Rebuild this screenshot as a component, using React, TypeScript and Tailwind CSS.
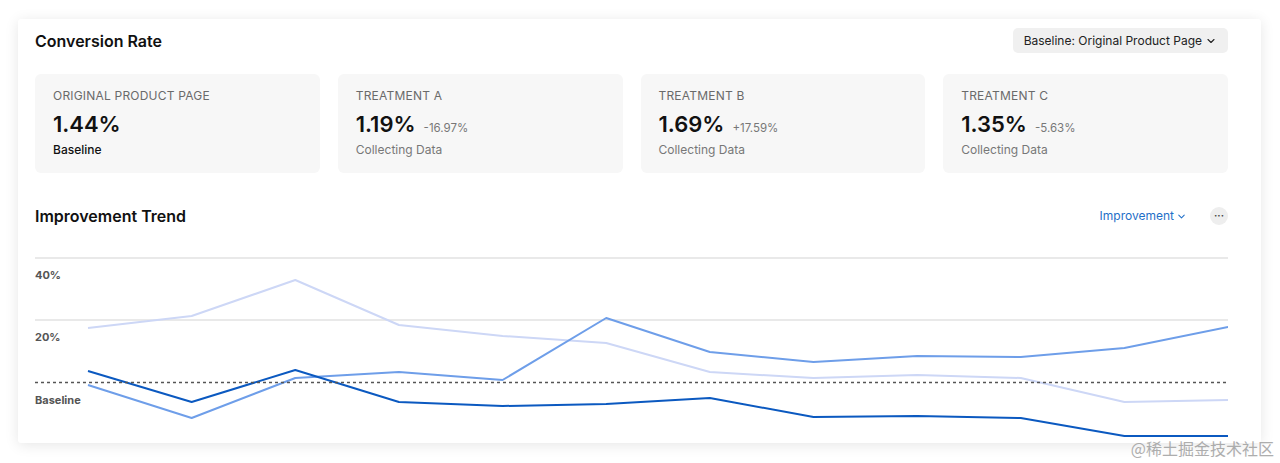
import React from "react";
import { ChevronDown } from "lucide-react";

const stats = [
  { label: "ORIGINAL PRODUCT PAGE", value: "1.44%", delta: "", sub: "Baseline", base: true },
  { label: "TREATMENT A", value: "1.19%", delta: "-16.97%", sub: "Collecting Data", base: false },
  { label: "TREATMENT B", value: "1.69%", delta: "+17.59%", sub: "Collecting Data", base: false },
  { label: "TREATMENT C", value: "1.35%", delta: "-5.63%", sub: "Collecting Data", base: false },
];

// y values in chart coordinates (svg top = page y 250)
const series = [
  { color: "#cdd7f6", ys: [78, 66, 30, 75, 86, 93, 122, 128, 125, 128, 152, 150] },
  { color: "#6e9ee9", ys: [135, 168, 128, 122, 130, 68, 102, 112, 106, 107, 98, 77] },
  { color: "#0b59c0", ys: [121, 152, 120, 152, 156, 154, 148, 167, 166, 168, 186, 186] },
];

const xs = Array.from({ length: 12 }, (_, i) => 53 + i * 103.64);

const TrendChart = () => (
  <svg width="1193" height="193" viewBox="0 0 1193 193" className="block">
    <line x1="0" y1="8" x2="1193" y2="8" stroke="#d4d4d4" strokeWidth="1.2" />
    <line x1="0" y1="70" x2="1193" y2="70" stroke="#d4d4d4" strokeWidth="1.2" />
    <text x="0" y="29" fontSize="11" fontWeight="700" fill="#555" fontFamily="Inter, sans-serif">
      40%
    </text>
    <text x="0" y="91" fontSize="11" fontWeight="700" fill="#555" fontFamily="Inter, sans-serif">
      20%
    </text>
    <text x="0" y="154" fontSize="11" fontWeight="700" fill="#555" fontFamily="Inter, sans-serif">
      Baseline
    </text>
    {series.map((s) => (
      <polyline
        key={s.color}
        points={s.ys.map((y, i) => `${xs[i]},${y}`).join(" ")}
        fill="none"
        stroke={s.color}
        strokeWidth="2"
        strokeLinejoin="round"
      />
    ))}
    <line x1="0" y1="132.5" x2="1193" y2="132.5" stroke="#555" strokeWidth="1.5" strokeDasharray="3 3" />
  </svg>
);

export default function App() {
  return (
    <div className="relative h-[463px] w-[1280px] overflow-hidden bg-white pl-[18px] pt-[19px] font-['Inter',sans-serif]">
      <div className="h-[424px] w-[1243px] rounded-[3px] bg-white pl-[17px] pr-[33px] pt-[9px] shadow-[0_2px_14px_rgba(0,0,0,0.1)]">
        <div className="flex h-[25px] items-center justify-between">
          <h2 className="text-[16px] font-semibold leading-6 text-[#111]">Conversion Rate</h2>
          <button className="flex h-[25px] items-center gap-[3px] rounded-[5px] bg-[#f0f0f0] px-[11px] text-[12px] text-[#222]">
            Baseline: Original Product Page
            <ChevronDown size={12} strokeWidth={2.2} />
          </button>
        </div>

        <div className="mt-[21px] grid grid-cols-4 gap-[18px]">
          {stats.map((s) => (
            <div key={s.label} className="h-[99px] rounded-[6px] bg-[#f7f7f7] px-[18px] pt-[14px]">
              <div className="text-[12px] leading-4 tracking-[0.2px] text-[#6a6a6a]">{s.label}</div>
              <div className="mt-[6px] flex items-baseline gap-[8px]">
                <span className="text-[22px] font-semibold leading-7 text-[#111]">{s.value}</span>
                {s.delta && <span className="text-[11.5px] text-[#777]">{s.delta}</span>}
              </div>
              <div
                className={
                  s.base
                    ? "mt-[4px] text-[12px] font-medium leading-4 text-[#111]"
                    : "mt-[4px] text-[12px] leading-4 text-[#777]"
                }
              >
                {s.sub}
              </div>
            </div>
          ))}
        </div>

        <div className="mt-[31px] flex h-6 items-center justify-between">
          <h2 className="text-[16px] font-semibold leading-6 text-[#111]">Improvement Trend</h2>
          <div className="flex items-center gap-[23px]">
            <button className="flex items-center gap-[2px] text-[12px] text-[#1f6fc8]">
              Improvement
              <ChevronDown size={11} strokeWidth={2.2} />
            </button>
            <button className="flex h-[18px] w-[18px] items-center justify-center rounded-full bg-[#eeeeee]">
              <span className="mb-[3px] text-[10px] font-bold leading-none text-[#444]">···</span>
            </button>
          </div>
        </div>

        <div className="mt-[22px]">
          <TrendChart />
        </div>
      </div>
      <div className="absolute bottom-[3px] right-[6px] text-[16px] text-[#9a9a9a] opacity-80 font-['Noto_Sans_CJK_SC',sans-serif]">
        @稀土掘金技术社区
      </div>
    </div>
  );
}
